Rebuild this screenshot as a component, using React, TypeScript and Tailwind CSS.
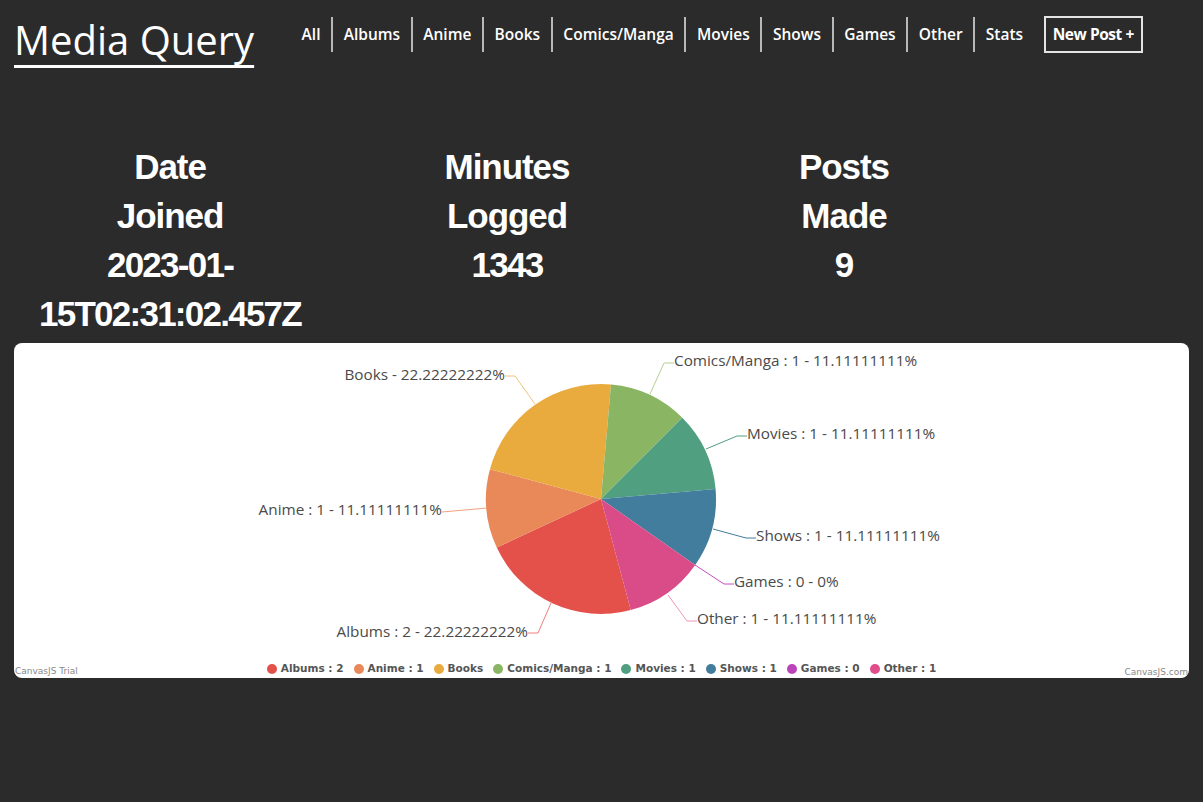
import React from 'react';

const NAV = ['All', 'Albums', 'Anime', 'Books', 'Comics/Manga', 'Movies', 'Shows', 'Games', 'Other', 'Stats'];

// pie geometry in page coordinates (svg viewBox matches the page)
const CX = 601;
const CY = 499;
const R = 115;
const START = 75;

const SLICES = [
    { name: 'Albums', value: 2, color: '#e4514b' },
    { name: 'Anime', value: 1, color: '#e98858' },
    { name: 'Books', value: 2, color: '#e9ab3e' },
    { name: 'Comics/Manga', value: 1, color: '#8ab562' },
    { name: 'Movies', value: 1, color: '#4f9f80' },
    { name: 'Shows', value: 1, color: '#437d9d' },
    { name: 'Games', value: 0, color: '#bb44bb' },
    { name: 'Other', value: 1, color: '#d94c88' },
];

const LABELS = [
    { text: 'Books - 22.22222222%', x: 505, y: 376, anchor: 'end', pts: '535,404 515,376 505,376', color: '#f0c27a' },
    { text: 'Anime : 1 - 11.11111111%', x: 442, y: 511, anchor: 'end', pts: '487,508 442,512', color: '#f0a27d' },
    { text: 'Comics/Manga : 1 - 11.11111111%', x: 674, y: 362, anchor: 'start', pts: '650,394 664,363 674,363', color: '#b3d092' },
    { text: 'Movies : 1 - 11.11111111%', x: 747, y: 435, anchor: 'start', pts: '706,449 737,436 747,436', color: '#4f9f80' },
    { text: 'Shows : 1 - 11.11111111%', x: 756, y: 537, anchor: 'start', pts: '713,529 746,538 756,538', color: '#437d9d' },
    { text: 'Games : 0 - 0%', x: 734, y: 583, anchor: 'start', pts: '695,565 724,584 734,584', color: '#c24fc2' },
    { text: 'Other : 1 - 11.11111111%', x: 697, y: 620, anchor: 'start', pts: '668,595 687,621 697,621', color: '#ee93bb' },
    { text: 'Albums : 2 - 22.22222222%', x: 528, y: 633, anchor: 'end', pts: '551,603 538,633 528,633', color: '#ee7f7a' },
];

const LEGEND = [
    { text: 'Albums : 2', color: '#e4514b' },
    { text: 'Anime : 1', color: '#e98858' },
    { text: 'Books', color: '#e9ab3e' },
    { text: 'Comics/Manga : 1', color: '#8ab562' },
    { text: 'Movies : 1', color: '#4f9f80' },
    { text: 'Shows : 1', color: '#437d9d' },
    { text: 'Games : 0', color: '#bb44bb' },
    { text: 'Other : 1', color: '#e04d8a' },
];

const polar = (deg: number) => {
    const rad = (deg * Math.PI) / 180;
    return [CX + R * Math.cos(rad), CY + R * Math.sin(rad)];
};

const slicePath = (a0: number, a1: number) => {
    const [x0, y0] = polar(a0);
    const [x1, y1] = polar(a1);
    const large = a1 - a0 > 180 ? 1 : 0;
    return `M${CX} ${CY} L${x0} ${y0} A${R} ${R} 0 ${large} 1 ${x1} ${y1} Z`;
};

const PieChart = () => {
    const total = SLICES.reduce((s, d) => s + d.value, 0);
    let angle = START;
    const paths = SLICES.filter(d => d.value > 0).map(d => {
        const sweep = (d.value / total) * 360;
        const p = slicePath(angle, angle + sweep);
        angle += sweep;
        return <path key={d.name} d={p} fill={d.color} />;
    });

    return (
        <svg width="1175" height="316" viewBox="14 343 1175 316" className="block">
            {paths}
            {LABELS.map(l => (
                <g key={l.text}>
                    <polyline points={l.pts} fill="none" stroke={l.color} strokeWidth="1" />
                    <text
                        x={l.x}
                        y={l.y}
                        textAnchor={l.anchor as 'start' | 'end'}
                        dominantBaseline="middle"
                        fill="#4a4a4a"
                        fontSize="15.3"
                        style={{ fontFamily: '"Open Sans", "DejaVu Sans", sans-serif' }}
                    >
                        {l.text}
                    </text>
                </g>
            ))}
        </svg>
    );
};

export default function App() {
    return (
        <div className="min-h-[802px] bg-[#2b2b2b] text-white">
            {/* Header */}
            <header className="h-[70px] flex items-start pl-[14px] pt-[13px]">
                <div className="w-[277px] shrink-0">
                    <a className="text-[40px] leading-[54px] text-white underline decoration-[3px] underline-offset-[10px] font-['Open_Sans',sans-serif]">
                        Media Query
                    </a>
                </div>
                <nav className="flex items-center mt-[3px] font-['Open_Sans',sans-serif] text-[15.5px] font-semibold">
                    {NAV.map((item, idx) => (
                        <a
                            key={item}
                            className={`h-[35px] flex items-center px-[10.6px] ${idx < NAV.length - 1 ? 'border-r-2 border-[#b8b8b8]' : ''}`}
                        >
                            {item}
                        </a>
                    ))}
                    <button className="ml-[10px] h-[37px] w-[99px] border-2 border-[#e4e4e4] font-bold text-[15.5px] tracking-[-0.03em]">
                        New Post +
                    </button>
                </nav>
            </header>

            {/* Stats */}
            <section className="pt-[72px] pl-[14px] flex gap-[25px] font-['Liberation_Sans',Arial,sans-serif] font-bold text-[35px] leading-[49px] tracking-[-0.03em] text-center">
                <div className="w-[312px]">
                    <div>Date</div>
                    <div>Joined</div>
                    <div className="tracking-[-0.05em]">2023-01-15T02:31:02.457Z</div>
                </div>
                <div className="w-[312px]">
                    <div>Minutes</div>
                    <div>Logged</div>
                    <div className="tracking-[-0.05em]">1343</div>
                </div>
                <div className="w-[312px]">
                    <div>Posts</div>
                    <div>Made</div>
                    <div>9</div>
                </div>
            </section>

            {/* Chart */}
            <div className="mx-[14px] mt-[5px] bg-white rounded-[8px] overflow-hidden h-[335px]">
                <PieChart />
                <div className="grid grid-cols-[1fr_auto_1fr] h-[19px] items-center px-[1px]">
                    <span className="self-end text-[9px] text-[#8a8a8a] font-['DejaVu_Sans',sans-serif] leading-[12px] mb-[1px]">CanvasJS Trial</span>
                    <div className="flex items-center gap-[10px] font-['DejaVu_Sans',sans-serif] text-[10.5px] font-bold text-[#555]">
                        {LEGEND.map(item => (
                            <div key={item.text} className="flex items-center gap-[4px]">
                                <span className="w-[10px] h-[10px] rounded-full" style={{ backgroundColor: item.color }} />
                                <span>{item.text}</span>
                            </div>
                        ))}
                    </div>
                    <span className="self-end justify-self-end text-[9px] text-[#8a8a8a] font-['DejaVu_Sans',sans-serif] leading-[12px]">CanvasJS.com</span>
                </div>
            </div>
        </div>
    );
}
